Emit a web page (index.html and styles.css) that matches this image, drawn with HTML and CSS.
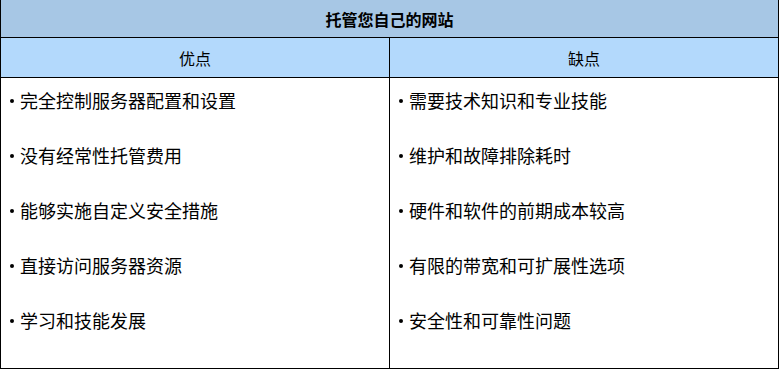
FILE: index.html
```html
<!DOCTYPE html>
<html lang="zh">
<head>
<meta charset="utf-8">
<title>托管您自己的网站</title>
<link rel="stylesheet" href="styles.css">
</head>
<body>
<div class="board">
  <div class="title">托管您自己的网站</div>
  <div class="cols">
    <div class="col col-left">
      <div class="head">优点</div>
      <ul class="list">
        <li>完全控制服务器配置和设置</li>
        <li>没有经常性托管费用</li>
        <li>能够实施自定义安全措施</li>
        <li>直接访问服务器资源</li>
        <li>学习和技能发展</li>
      </ul>
    </div>
    <div class="col">
      <div class="head">缺点</div>
      <ul class="list">
        <li>需要技术知识和专业技能</li>
        <li>维护和故障排除耗时</li>
        <li>硬件和软件的前期成本较高</li>
        <li>有限的带宽和可扩展性选项</li>
        <li>安全性和可靠性问题</li>
      </ul>
    </div>
  </div>
</div>
</body>
</html>
```
FILE: styles.css
```css
html, body {
  margin: 0;
  padding: 0;
  background: #fff;
}
body {
  font-family: "Noto Sans CJK SC", "Noto Sans", sans-serif;
  color: #000;
}
.board {
  width: 779px;
  box-sizing: border-box;
  border-left: 1px solid #000;
  border-right: 1px solid #000;
  border-bottom: 1px solid #000;
}
.title {
  height: 37px;
  background: #a7c7e5;
  border-bottom: 1px solid #000;
  display: flex;
  align-items: center;
  justify-content: center;
  font-weight: bold;
  font-size: 16px;
  line-height: 20px;
}
.cols {
  display: grid;
  grid-template-columns: 389px 388px;
}
.col-left {
  border-right: 1px solid #000;
}
.head {
  height: 39px;
  background: #b3d9fc;
  border-bottom: 1px solid #000;
  display: flex;
  align-items: center;
  justify-content: center;
  font-size: 16px;
  line-height: 20px;
}
.list {
  list-style: none;
  margin: 0;
  height: 290px;
  box-sizing: border-box;
  padding: 11px 8px 0 8px;
}
.list li {
  display: flex;
  font-size: 18px;
  line-height: 22px;
  margin-bottom: 33px;
}
.list li::before {
  content: "";
  flex: none;
  width: 4px;
  height: 4px;
  border-radius: 50%;
  background: #000;
  margin: 10px 6px 0 1px;
}
```
